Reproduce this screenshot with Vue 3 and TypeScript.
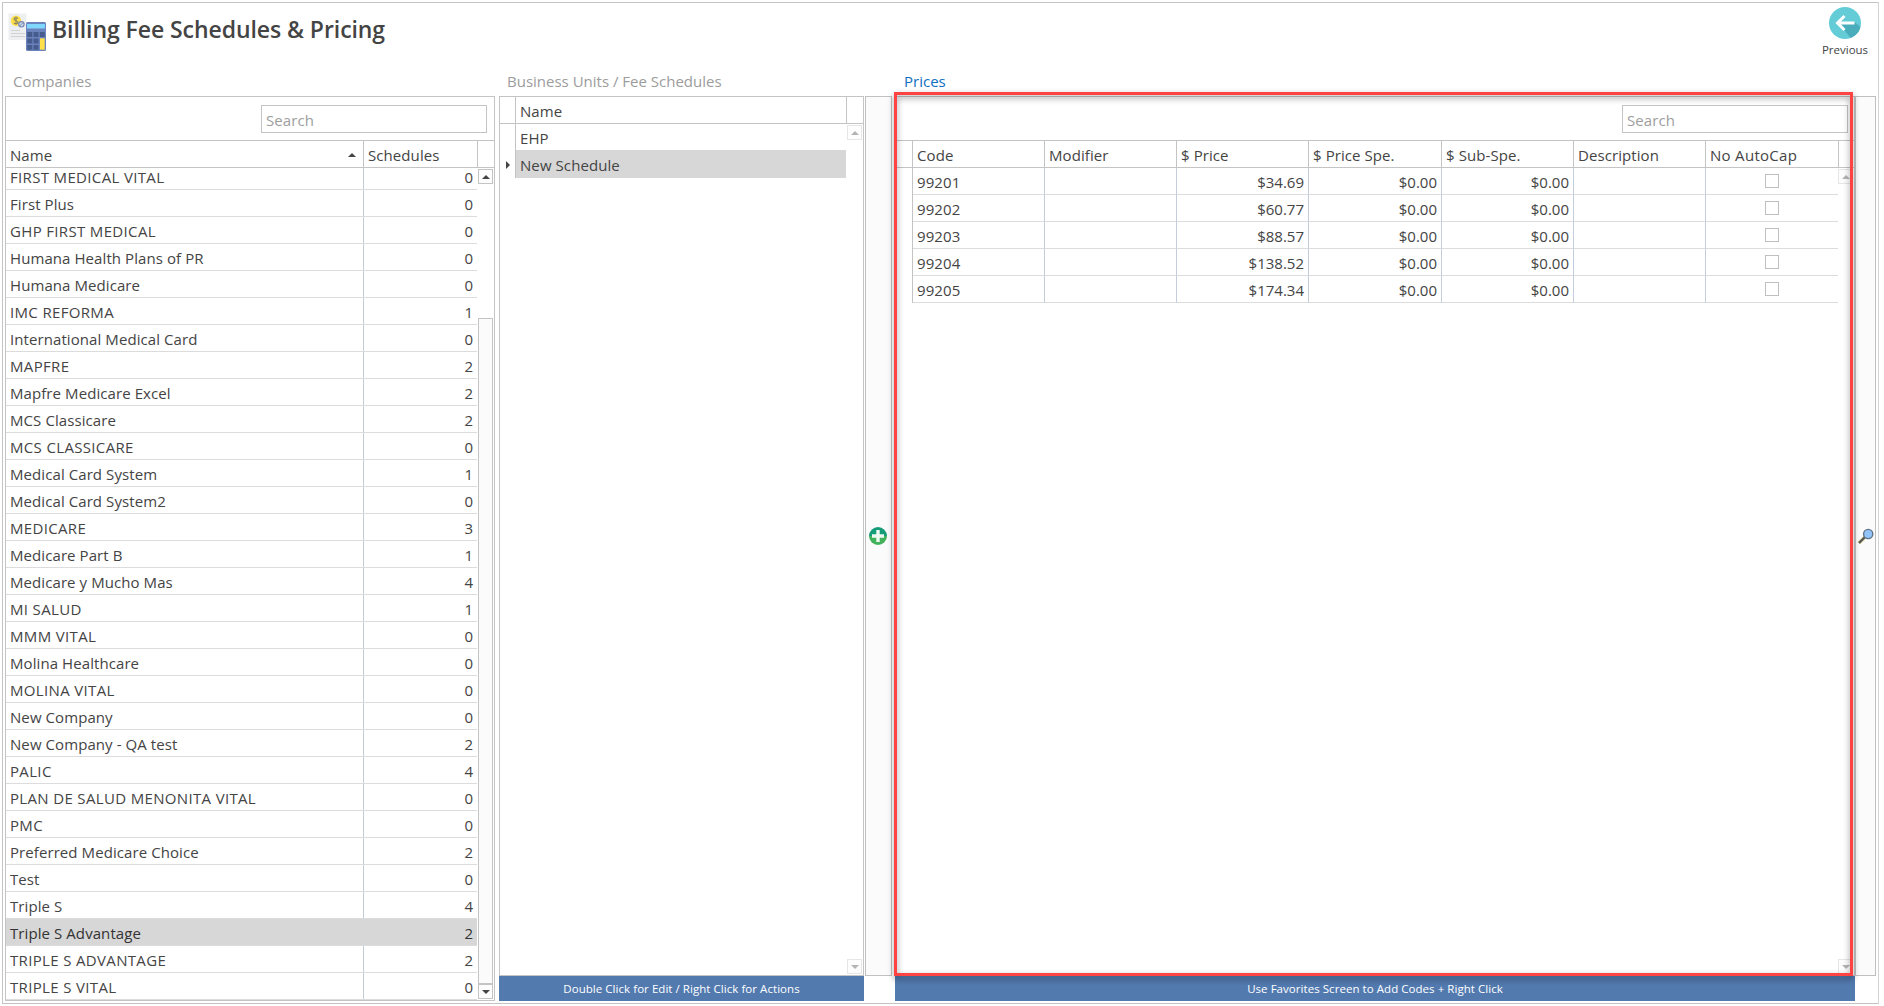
<script setup lang="ts">
interface Company {
  name: string
  schedules: number
}

interface Price {
  code: string
  price: string
}

const companies: Company[] = [
  { name: 'FIRST MEDICAL VITAL', schedules: 0 },
  { name: 'First Plus', schedules: 0 },
  { name: 'GHP FIRST MEDICAL', schedules: 0 },
  { name: 'Humana Health Plans of PR', schedules: 0 },
  { name: 'Humana Medicare', schedules: 0 },
  { name: 'IMC REFORMA', schedules: 1 },
  { name: 'International Medical Card', schedules: 0 },
  { name: 'MAPFRE', schedules: 2 },
  { name: 'Mapfre Medicare Excel', schedules: 2 },
  { name: 'MCS Classicare', schedules: 2 },
  { name: 'MCS CLASSICARE', schedules: 0 },
  { name: 'Medical Card System', schedules: 1 },
  { name: 'Medical Card System2', schedules: 0 },
  { name: 'MEDICARE', schedules: 3 },
  { name: 'Medicare Part B', schedules: 1 },
  { name: 'Medicare y Mucho Mas', schedules: 4 },
  { name: 'MI SALUD', schedules: 1 },
  { name: 'MMM VITAL', schedules: 0 },
  { name: 'Molina Healthcare', schedules: 0 },
  { name: 'MOLINA VITAL', schedules: 0 },
  { name: 'New Company', schedules: 0 },
  { name: 'New Company - QA test', schedules: 2 },
  { name: 'PALIC', schedules: 4 },
  { name: 'PLAN DE SALUD MENONITA VITAL', schedules: 0 },
  { name: 'PMC', schedules: 0 },
  { name: 'Preferred Medicare Choice', schedules: 2 },
  { name: 'Test', schedules: 0 },
  { name: 'Triple S', schedules: 4 },
  { name: 'Triple S Advantage', schedules: 2 },
  { name: 'TRIPLE S ADVANTAGE', schedules: 2 },
  { name: 'TRIPLE S VITAL', schedules: 0 },
]
const selectedCompany = 'Triple S Advantage'

const isCaps = (name: string): boolean => name === name.toUpperCase()

const prices: Price[] = [
  { code: '99201', price: '$34.69' },
  { code: '99202', price: '$60.77' },
  { code: '99203', price: '$88.57' },
  { code: '99204', price: '$138.52' },
  { code: '99205', price: '$174.34' },
]
const priceColumns = ['Code', 'Modifier', '$ Price', '$ Price Spe.', '$ Sub-Spe.', 'Description', 'No AutoCap']
</script>

<template>
  <div class="window">
    <header class="top">
      <svg class="logo" width="40" height="40" viewBox="0 0 40 40">
        <rect x="0.5" y="0.5" width="18" height="26.5" fill="#eeeff1" />
        <circle cx="8" cy="7.7" r="5.2" fill="#ffe04a" />
        <path d="M10 5.6C9 4.3 6 4.3 6 6.1c0 2 4 1.2 4 3.2 0 1.800-3.200 1.900-4.200.4M8 3.600v8.200" fill="none" stroke="#8b8560" stroke-width="1.100" />
        <circle cx="13.400" cy="11.300" r="2.700" fill="#d5dbe9" stroke="#7688b5" stroke-width="1.200" />
        <path d="M11.600 13.200l3.600-3.800" stroke="#7688b5" stroke-width="1" />
        <path d="M3 17.500h9M3 20.500h14M3 23.500h14" stroke="#d0d2d6" stroke-width="1" />
        <rect x="18" y="9" width="20" height="29" rx="1.500" fill="#6b83bd" />
        <rect x="19" y="11" width="18" height="4.500" fill="#80d6fb" />
        <g fill="#455c8c">
          <rect x="19.300" y="19" width="5" height="5" /><rect x="25.500" y="19" width="5" height="5" /><rect x="31.700" y="19" width="5" height="5" />
          <rect x="19.300" y="25.500" width="5" height="5" /><rect x="25.500" y="25.500" width="5" height="5" />
          <rect x="19.300" y="32" width="5" height="4.700" /><rect x="25.500" y="32" width="5" height="4.700" />
        </g>
        <rect x="32" y="25.300" width="4.700" height="11.400" fill="#ffe04a" />
      </svg>
      <h1>Billing Fee Schedules &amp; Pricing</h1>
      <button class="previous">
        <svg width="32" height="32" viewBox="0 0 32 32">
          <clipPath id="disc"><circle cx="16" cy="16" r="16" /></clipPath>
          <g clip-path="url(#disc)">
            <rect width="32" height="32" fill="#64ccd6" />
            <path d="M14.500 22L24 34 36 24 25.500 15 9 16z" fill="#4aadbb" />
          </g>
          <path d="M25.500 16H9M15.500 9l-7 7 7 7" fill="none" stroke="#fff" stroke-width="3" />
        </svg>
        <span>Previous</span>
      </button>
    </header>

    <main class="columns">
      <section class="col companies">
        <h2>Companies</h2>
        <div class="panel">
          <div class="toolbar"><div class="search">Search</div></div>
          <div class="head company-grid">
            <span class="cell">Name<i class="tri up sort" /></span>
            <span class="cell">Schedules</span>
            <span />
          </div>
          <div class="scroll-area">
            <div class="rows clipped">
              <div v-for="c in companies" :key="c.name" class="row company-row" :class="{ selected: c.name === selectedCompany }">
                <span class="cell" :class="{ caps: isCaps(c.name) }">{{ c.name }}</span>
                <span class="cell num">{{ c.schedules }}</span>
              </div>
            </div>
            <div class="scrollbar">
              <div class="sb-button"><i class="tri up" /></div>
              <div class="track"><div class="thumb" /></div>
              <div class="sb-button"><i class="tri down" /></div>
            </div>
          </div>
        </div>
      </section>

      <section class="col units">
        <h2>Business Units / Fee Schedules</h2>
        <div class="panel">
          <div class="head unit-grid"><span /><span class="cell">Name</span><span /></div>
          <div class="scroll-area">
            <div class="rows">
              <div class="unit-row"><span class="mark" /><span class="cell">EHP</span></div>
              <div class="unit-row selected"><span class="mark"><i class="tri right" /></span><span class="cell">New Schedule</span></div>
            </div>
            <div class="scrollbar faint">
              <div class="sb-button"><i class="tri up" /></div>
              <div class="track" />
              <div class="sb-button"><i class="tri down" /></div>
            </div>
          </div>
        </div>
        <footer class="hint">Double Click for Edit / Right Click for Actions</footer>
      </section>

      <div class="side add">
        <svg width="18" height="18" viewBox="0 0 18 18">
          <path d="M0 9a9 9 0 0 1 18 0z" fill="#159c78" />
          <path d="M0 9a9 9 0 0 0 18 0z" fill="#43b25c" />
          <path d="M9 3v12M3 9h12" stroke="#eefaf2" stroke-width="3.400" />
        </svg>
      </div>

      <section class="col prices">
        <h2 class="active">Prices</h2>
        <div class="panel">
          <div class="toolbar"><div class="search">Search</div></div>
          <div class="head price-grid">
            <span />
            <span v-for="label in priceColumns" :key="label" class="cell">{{ label }}</span>
            <span />
          </div>
          <div class="scroll-area">
            <div class="rows">
              <div v-for="p in prices" :key="p.code" class="price-row">
                <span class="mark" />
                <span class="cell">{{ p.code }}</span>
                <span class="cell" />
                <span class="cell num">{{ p.price }}</span>
                <span class="cell num">$0.00</span>
                <span class="cell num">$0.00</span>
                <span class="cell" />
                <span class="cell check"><i class="box" /></span>
              </div>
            </div>
            <div class="scrollbar faint">
              <div class="sb-button"><i class="tri up" /></div>
              <div class="track" />
              <div class="sb-button"><i class="tri down" /></div>
            </div>
          </div>
        </div>
        <footer class="hint">Use Favorites Screen to Add Codes + Right Click</footer>
        <div class="highlight" />
      </section>

      <div class="side find">
        <svg width="18" height="18" viewBox="0 0 18 18">
          <path d="M2 16l6-6" stroke="#d8d296" stroke-width="3.600" />
          <path d="M2 16l6-6" stroke="#555" stroke-width="2.200" />
          <circle cx="11.200" cy="7" r="4.600" fill="#92c4fa" stroke="#5f7387" stroke-width="1.400" />
        </svg>
      </div>
    </main>
  </div>
</template>

<style>
body {
  background: #fff;
}
</style>

<style scoped>
* {
  box-sizing: border-box;
}
.window {
  width: 1877px;
  height: 1002px;
  margin: 2px 0 0 2px;
  border: 1px solid #c4c4c4;
  border-right-color: #d4d4d4;
  display: flex;
  flex-direction: column;
  overflow: hidden;
  font: 15px/26px "Open Sans", "Noto Sans", sans-serif;
  letter-spacing: 0.08px;
  color: #444;
  white-space: nowrap;
}
i {
  display: block;
}
.top {
  flex: none;
  height: 66px;
  display: flex;
  align-items: flex-start;
  padding: 4px 8px 0 5px;
}
.logo {
  margin-top: 6px;
}
h1 {
  margin: 5px 0 0 4px;
  font-size: 23px;
  line-height: 34px;
  font-weight: 600;
  letter-spacing: -0.07px;
  color: #444;
}
.previous {
  margin-left: auto;
  width: 50px;
  padding: 0;
  border: 0;
  background: none;
  display: flex;
  flex-direction: column;
  align-items: center;
  font: 11.500px/16px "Open Sans", "Noto Sans", sans-serif;
  color: #444;
}
.previous span {
  margin-top: 3px;
}
.columns {
  flex: 1;
  min-height: 0;
  display: flex;
  padding: 0 2px 2px 2px;
}
.col {
  flex: none;
  display: flex;
  flex-direction: column;
  position: relative;
}
.companies {
  width: 490px;
}
.units {
  width: 365px;
  margin-left: 4px;
}
.prices {
  width: 960px;
  margin-left: 3px;
}
h2 {
  flex: none;
  height: 27px;
  margin: 0;
  padding: 0 8px;
  font-size: 15px;
  line-height: 24px;
  letter-spacing: 0;
  font-weight: 400;
  color: #9c9c9c;
}
h2.active {
  padding-left: 9px;
  color: #0f6fc2;
}
.panel {
  flex: 1;
  min-height: 0;
  border: 1px solid #c4c4c4;
  display: flex;
  flex-direction: column;
}
.toolbar {
  flex: none;
  height: 43px;
  padding: 8px 7px 0;
  display: flex;
  justify-content: flex-end;
}
.prices .toolbar {
  padding-right: 6px;
}
.search {
  width: 226px;
  height: 28px;
  padding: 1px 4px 0;
  border: 1px solid #c4c4c4;
  background: #fff;
  color: #9e9e9e;
}
.head {
  flex: none;
  height: 28px;
  display: grid;
  border: solid #c4c4c4;
  border-width: 1px 0;
}
.units .head {
  height: 27px;
  border-top: 0;
}
.head > span {
  border-right: 1px solid #c4c4c4;
}
.head > span:last-child {
  border-right: 0;
}
.company-grid {
  grid-template-columns: 358px 114px 1fr;
}
.unit-grid {
  grid-template-columns: 16px 331px 1fr;
}
.price-grid {
  grid-template-columns: 17px 132px 132px 132px 133px 132px 132px 133px 1fr;
}
.cell {
  height: 26px;
  padding: 1px 4px 0;
  line-height: 26px;
}
.caps {
  letter-spacing: 0.34px;
}
.head .cell {
  display: flex;
  justify-content: space-between;
}
.price-grid .cell:nth-last-child(2) {
  letter-spacing: 0.3px;
}
.scroll-area {
  flex: 1;
  min-height: 0;
  display: flex;
  justify-content: space-between;
}
.rows {
  overflow: hidden;
}
.companies .rows {
  width: 471px;
}
.clipped {
  display: flex;
  flex-direction: column;
  justify-content: flex-end;
}
.row {
  flex: none;
  height: 27px;
  display: grid;
  grid-template-columns: 358px 113px;
  border-bottom: 1px solid #dcdcdc;
}
.row .cell:first-child {
  border-right: 1px solid #c3ccd6;
}
.selected.row {
  background: #d7d7d7;
  color: #333;
}
.selected.row .cell {
  border-color: #d7d7d7;
}
.num {
  text-align: right;
  letter-spacing: 0;
}
.units .rows {
  width: 346px;
}
.unit-row {
  height: 27px;
  display: grid;
  grid-template-columns: 16px 330px;
}
.units .unit-row:first-child {
  height: 26px;
}
.unit-row.selected .cell {
  height: 28px;
  padding-top: 2px;
  background: #d7d7d7;
}
.unit-row.selected {
  height: 28px;
}
.mark {
  border-right: 1px solid #c4c4c4;
}
.price-row {
  height: 27px;
  display: grid;
  grid-template-columns: 17px 132px 132px 132px 133px 132px 132px 132px;
}
.price-row .cell {
  height: 27px;
  border-right: 1px solid #c3cddb;
  border-bottom: 1px solid #dcdcdc;
}
.price-row .cell:last-child {
  border-right: 0;
}
.check {
  display: flex;
  justify-content: center;
}
.box {
  width: 14px;
  height: 14px;
  margin: 5px 0 0 0;
  border: 1px solid #c0c0c0;
  background: #fff;
}
.tri {
  width: 0;
  height: 0;
  border: 4px solid transparent;
}
.tri.up {
  border-top: 0;
  border-bottom-color: #444;
}
.tri.down {
  border-bottom: 0;
  border-top-color: #444;
}
.tri.right {
  margin: 11px 0 0 6px;
  border-right: 0;
  border-left-color: #444;
}
.tri.sort {
  margin: 11px 3px 0 0;
}
.scrollbar {
  width: 16px;
  padding: 1px 1px 1px 0;
  display: flex;
  flex-direction: column;
}
.sb-button {
  height: 15px;
  border: 1px solid #c4c4c4;
  background: #fdfdfd;
  display: flex;
  align-items: center;
  justify-content: center;
}
.track {
  flex: 1;
  display: flex;
}
.thumb {
  flex: 1;
  margin-top: 134px;
  border: 1px solid #c4c4c4;
  background: #fbfbfb;
}
.faint .sb-button {
  border-color: #e6e6e6;
}
.faint .tri.up {
  border-bottom-color: #b4b4b4;
}
.faint .tri.down {
  border-top-color: #b4b4b4;
}
.hint {
  flex: none;
  height: 25px;
  background: #527aaf;
  color: #fff;
  font-size: 11.500px;
  line-height: 25px;
  letter-spacing: 0.05px;
  text-align: center;
}
.side {
  flex: none;
  margin-top: 27px;
  margin-bottom: 25px;
  border: 1px solid #c0c0c0;
  background: #fbfbfb;
  display: flex;
  align-items: center;
  justify-content: center;
}
.add {
  width: 27px;
  margin-left: 1px;
  padding-right: 1px;
}
.find {
  width: 21px;
}
/* Callout frame drawn over the price grid */
.highlight {
  position: absolute;
  left: -1px;
  top: 23px;
  width: 959px;
  height: 884px;
  border: 3px solid #ff4343;
  filter: drop-shadow(0 3px 3px rgba(0, 0, 0, 0.45));
  pointer-events: none;
}
</style>
